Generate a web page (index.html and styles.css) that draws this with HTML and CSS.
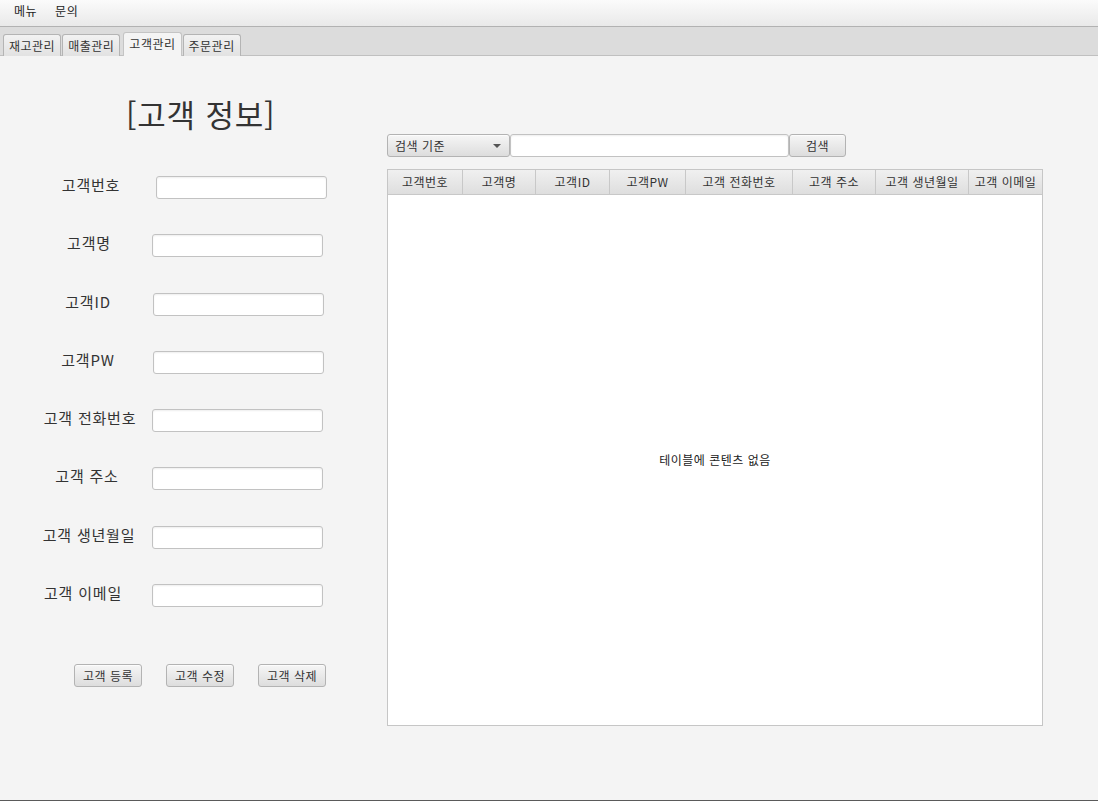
FILE: index.html
```html
<!DOCTYPE html>
<html lang="ko">
<head>
<meta charset="utf-8">
<title>고객관리</title>
<link rel="stylesheet" href="styles.css">
</head>
<body>
<div class="window">
  <div class="menubar">
    <span class="menu-item">메뉴</span>
    <span class="menu-item">문의</span>
  </div>
  <div class="tabbar">
    <span class="tab">재고관리</span>
    <span class="tab">매출관리</span>
    <span class="tab tab-active">고객관리</span>
    <span class="tab">주문관리</span>
  </div>
  <div class="content">
    <div class="left-pane">
      <div class="title">[고객 정보]</div>
      <div class="form">
        <label class="field-label">고객번호</label><div class="textfield shift"></div>
        <label class="field-label off4">고객명</label><div class="textfield"></div>
        <label class="field-label off6">고객ID</label><div class="textfield nudge"></div>
        <label class="field-label off6">고객PW</label><div class="textfield nudge"></div>
        <label class="field-label off2">고객 전화번호</label><div class="textfield"></div>
        <label class="field-label off8">고객 주소</label><div class="textfield"></div>
        <label class="field-label off4">고객 생년월일</label><div class="textfield"></div>
        <label class="field-label off16">고객 이메일</label><div class="textfield"></div>
      </div>
      <div class="actions">
        <span class="btn action-btn">고객 등록</span>
        <span class="btn action-btn">고객 수정</span>
        <span class="btn action-btn">고객 삭제</span>
      </div>
    </div>
    <div class="right-pane">
      <div class="search-row">
        <span class="btn combo">검색 기준<span class="arrow"></span></span>
        <span class="textfield search-field"></span>
        <span class="btn search-btn">검색</span>
      </div>
      <div class="table">
        <div class="thead">
          <span class="th c1">고객번호</span>
          <span class="th c2">고객명</span>
          <span class="th c3">고객ID</span>
          <span class="th c4">고객PW</span>
          <span class="th c5">고객 전화번호</span>
          <span class="th c6">고객 주소</span>
          <span class="th c7">고객 생년월일</span>
          <span class="th c8">고객 이메일</span>
        </div>
        <div class="tbody">
          <span class="placeholder">테이블에 콘텐츠 없음</span>
        </div>
      </div>
    </div>
  </div>
</div>
</body>
</html>
```

FILE: styles.css
```css
* { box-sizing: border-box; }
html, body { margin: 0; padding: 0; }
body {
  width: 1098px;
  height: 801px;
  overflow: hidden;
  background: #f4f4f4;
  font-family: "Noto Sans CJK KR", "Noto Sans", sans-serif;
  color: #333;
  font-size: 12px;
  letter-spacing: 0.5px;
}
.window {
  width: 1098px;
  height: 801px;
  display: flex;
  flex-direction: column;
  border-bottom: 1px solid #5a5a5a;
}
.menubar {
  height: 27px;
  display: flex;
  align-items: center;
  padding-left: 14px;
  gap: 18px;
  background: linear-gradient(to bottom, #fbfbfb, #e9e9e9);
  border-bottom: 1px solid #b2b2b2;
  line-height: 16px;
  padding-bottom: 4px;
}
.menu-item { font-size: 12px; color: #222; }
.tabbar {
  height: 29px;
  display: flex;
  align-items: flex-end;
  padding-left: 3px;
  gap: 1px;
  background: #dcdcdc;
  border-bottom: 1px solid #c0c0c0;
}
.tab {
  height: 22px;
  margin-bottom: -1px;
  padding: 0 5px;
  display: flex;
  align-items: center;
  font-size: 12px;
  line-height: 14px;
  color: #333;
  border: 1px solid #b4b4b4;
  border-bottom: none;
  border-radius: 3px 3px 0 0;
  background: linear-gradient(to bottom, #f2f2f2, #e2e2e2);
}
.tab-active {
  height: 24px;
  margin-left: 2px;
  background: #f4f4f4;
  border-color: #c4c4c4;
  padding-bottom: 2px;
}
.content {
  flex: 1;
  display: flex;
}
.left-pane {
  width: 387px;
  display: flex;
  flex-direction: column;
}
.title {
  margin-top: 40px;
  padding-left: 126px;
  font-size: 31px;
  line-height: 36px;
  color: #333;
  letter-spacing: 0.8px;
}
.form {
  margin-top: 44px;
  padding-left: 30px;
  display: grid;
  grid-template-columns: 122px 171px;
  grid-auto-rows: 23px;
  row-gap: 35.3px;
  align-items: center;
}
.field-label {
  font-size: 15px;
  line-height: 18px;
  letter-spacing: 0.8px;
  text-align: center;
  color: #333;
  margin-top: -5px;
  white-space: nowrap;
}
.off2 { padding-right: 2px; }
.off4 { padding-right: 4px; }
.off6 { padding-right: 6px; }
.off8 { padding-right: 8px; }
.off16 { padding-right: 16px; }
.textfield {
  display: block;
  height: 23px;
  background: #fff;
  border: 1px solid #c2c2c2;
  border-radius: 3px;
  box-shadow: inset 0 1px 2px rgba(0,0,0,0.07);
}
.shift { margin-left: 4px; margin-right: -4px; }
.nudge { margin-left: 1px; margin-right: -1px; }
.actions {
  margin-top: 57px;
  padding-left: 74px;
  display: flex;
  gap: 24px;
}
.btn {
  display: inline-flex;
  align-items: center;
  justify-content: center;
  height: 23px;
  font-size: 12px;
  line-height: 14px;
  color: #333;
  border: 1px solid #b3b3b3;
  border-radius: 3px;
  background: linear-gradient(to bottom, #f6f6f6, #dddddd);
  box-shadow: inset 0 1px 0 rgba(255,255,255,0.7);
}
.action-btn { width: 68px; }
.right-pane {
  padding-top: 78px;
  display: flex;
  flex-direction: column;
}
.search-row {
  display: flex;
  height: 23px;
}
.combo {
  width: 123px;
  justify-content: flex-start;
  padding-left: 7px;
  position: relative;
}
.arrow {
  position: absolute;
  right: 8px;
  top: 9px;
  width: 0;
  height: 0;
  border-left: 4px solid transparent;
  border-right: 4px solid transparent;
  border-top: 4px solid #555;
}
.search-field {
  width: 279px;
}
.search-btn {
  width: 57px;
}
.table {
  margin-top: 12px;
  width: 656px;
  height: 557px;
  border: 1px solid #c6c6c6;
  background: #fff;
  display: flex;
  flex-direction: column;
}
.thead {
  display: flex;
  height: 25px;
  border-bottom: 1px solid #c8c8c8;
  background: linear-gradient(to bottom, #f0f0f0, #dedede);
}
.th {
  display: flex;
  align-items: center;
  justify-content: center;
  border-right: 1px solid #c8c8c8;
  font-size: 12px;
  line-height: 14px;
  color: #333;
  white-space: nowrap;
  overflow: hidden;
}
.c1 { width: 75px; }
.c2 { width: 73px; }
.c3 { width: 74px; }
.c4 { width: 76px; }
.c5 { width: 107px; }
.c6 { width: 83px; }
.c7 { width: 93px; }
.c8 { flex: 1; border-right: none; }
.tbody {
  flex: 1;
  display: flex;
  align-items: center;
  justify-content: center;
}
.placeholder {
  font-size: 12px;
  color: #222;
  margin-top: -2px;
}
```
